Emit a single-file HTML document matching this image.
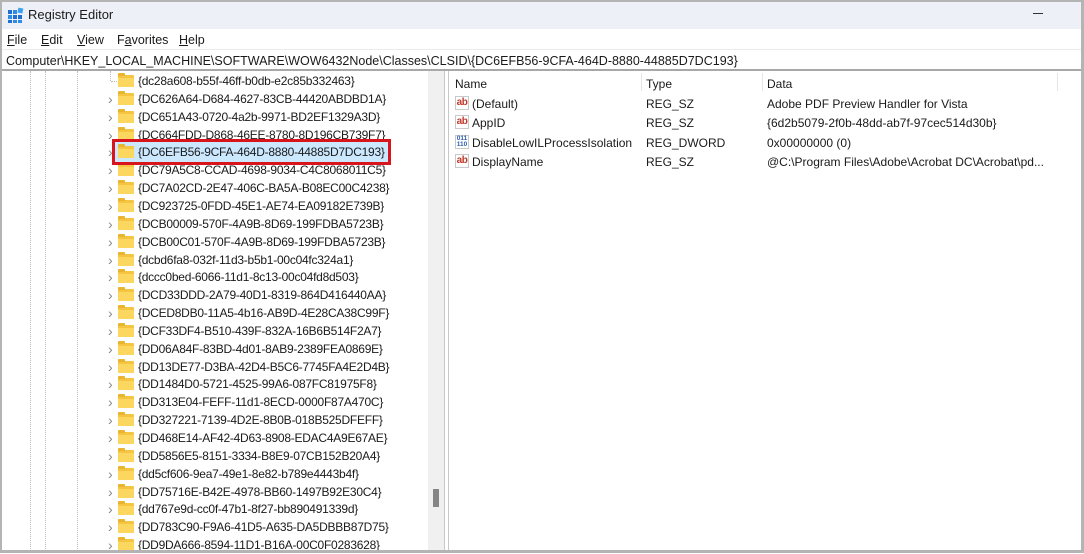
<!DOCTYPE html>
<html><head><meta charset="utf-8"><style>
*{margin:0;padding:0;box-sizing:border-box}
body{width:1084px;height:553px;overflow:hidden;background:#fff;font-family:"Liberation Sans",Arial,sans-serif;font-size:12.5px;color:#1a1a1a;position:relative}
.frame{position:absolute;left:0;top:0;width:1084px;height:553px;border:2px solid #b4b4b4;border-right-width:3px;border-bottom-width:3px;pointer-events:none;z-index:10}
.title{position:absolute;left:0;top:0;width:1084px;height:29px;background:#eef0f8}
.title span{position:absolute;left:28px;top:7px;font-size:13px}
.menu{position:absolute;left:0;top:29px;width:1084px;height:20px;background:#fff}
.menu span{position:absolute;top:4px;font-size:12.5px}
.addr{position:absolute;left:0;top:49px;width:1084px;height:22px;background:#fff;border-top:1px solid #ececec;border-bottom:2px solid #a8a8a8}
.addr span{position:absolute;left:6px;top:4px;font-size:12.5px;white-space:nowrap}
.dot{position:absolute;top:71px;height:482px;border-left:1px dotted #bdbdbd}
#tree{position:absolute;left:0;top:0;z-index:6}
.row{position:absolute;left:108px;height:17px;white-space:nowrap;font-size:12px;letter-spacing:-0.25px}
.chev{position:absolute;left:0;top:0;color:#888;font-size:14px}
.fold{position:absolute;left:10px;top:2px;width:16px;height:12px;background:#f5c542;border-radius:1px}
.fold:before{content:"";position:absolute;left:0;top:-2px;width:7px;height:3px;background:#e8b530;border-radius:1px 1px 0 0}
.fold:after{content:"";position:absolute;left:0;top:3px;width:16px;height:9px;background:#fbd75f}
.row .t{position:absolute;left:30px;top:1px}
.sb{position:absolute;left:428px;top:71px;width:16px;height:482px;background:#f0f0f0}
.thumb{position:absolute;left:433px;top:489px;width:6px;height:18px;background:#858585}
.split1{position:absolute;left:444px;top:71px;height:482px;border-left:1px solid #c8c8c8}
.split2{position:absolute;left:448px;top:71px;height:482px;border-left:1px solid #c8c8c8}
.rp{position:absolute;top:0;white-space:nowrap;font-size:12px}
.ab{position:absolute;left:455px;width:14px;height:14px;border:1px solid #c9c9c9;background:#fff;color:#c0392b;font-size:10px;font-weight:bold;line-height:11px;text-align:center;letter-spacing:-0.5px}
.bin{position:absolute;left:455px;width:14px;height:14px;border:1px solid #c9c9c9;background:#fff;color:#2a5db0;font-size:6.5px;font-weight:bold;line-height:6px;text-align:center}
</style></head><body>
<div class="title">
<svg style="position:absolute;left:8px;top:7px" width="16" height="16" viewBox="0 0 16 16"><rect x="0" y="3" width="4" height="4" fill="#1f6fd1"/><rect x="5" y="3" width="4" height="4" fill="#2f8be6"/><rect x="0" y="8" width="4" height="4" fill="#2f8be6"/><rect x="5" y="8" width="4" height="4" fill="#1f6fd1"/><rect x="0" y="13" width="4" height="3" fill="#1f6fd1"/><rect x="5" y="13" width="4" height="3" fill="#2f8be6"/><rect x="10" y="8" width="4" height="4" fill="#1f6fd1"/><rect x="10" y="13" width="4" height="3" fill="#2f8be6"/><rect x="10" y="1" width="5" height="5" fill="#3aa0f0" transform="rotate(12 12 3)"/></svg>
<span>Registry Editor</span>
<div style="position:absolute;left:1033px;top:13px;width:10px;height:1px;background:#333"></div>
</div>
<div class="menu">
<span style="left:7px"><u>F</u>ile</span>
<span style="left:41px"><u>E</u>dit</span>
<span style="left:77px"><u>V</u>iew</span>
<span style="left:117px">F<u>a</u>vorites</span>
<span style="left:179px"><u>H</u>elp</span>
</div>
<div class="addr"><span>Computer\HKEY_LOCAL_MACHINE\SOFTWARE\WOW6432Node\Classes\CLSID\{DC6EFB56-9CFA-464D-8880-44885D7DC193}</span></div>

<div class="dot" style="left:30px"></div>
<div class="dot" style="left:45px"></div>
<div class="dot" style="left:77px"></div>
<div class="dot" style="left:110px;top:71px;height:10px"></div>
<div style="position:absolute;left:111px;top:81px;width:6px;border-top:1px dotted #bdbdbd"></div>

<div style="position:absolute;left:114px;top:141px;width:275px;height:21px;background:#cce8ff"></div>
<div id="tree"></div>
<div style="position:absolute;left:112px;top:139px;width:279px;height:26px;border:3px solid #d8141c;z-index:7"></div>

<div class="sb"></div><div class="thumb"></div>
<div class="split1"></div><div class="split2"></div>

<div class="rp" style="left:455px;top:77px">Name</div>
<div class="rp" style="left:646px;top:77px">Type</div>
<div class="rp" style="left:767px;top:77px">Data</div>
<div style="position:absolute;left:641px;top:73px;height:18px;border-left:1px solid #e5e5e5"></div>
<div style="position:absolute;left:762px;top:73px;height:18px;border-left:1px solid #e5e5e5"></div>
<div style="position:absolute;left:1057px;top:73px;height:18px;border-left:1px solid #e5e5e5"></div>

<div class="ab" style="top:96px">ab</div>
<div class="rp" style="left:472px;top:97px">(Default)</div>
<div class="rp" style="left:646px;top:97px">REG_SZ</div>
<div class="rp" style="left:767px;top:97px">Adobe PDF Preview Handler for Vista</div>

<div class="ab" style="top:115px">ab</div>
<div class="rp" style="left:472px;top:116px">AppID</div>
<div class="rp" style="left:646px;top:116px">REG_SZ</div>
<div class="rp" style="left:767px;top:116px">{6d2b5079-2f0b-48dd-ab7f-97cec514d30b}</div>

<div class="bin" style="top:135px">011<br>110</div>
<div class="rp" style="left:472px;top:136px">DisableLowILProcessIsolation</div>
<div class="rp" style="left:646px;top:136px">REG_DWORD</div>
<div class="rp" style="left:767px;top:136px">0x00000000 (0)</div>

<div class="ab" style="top:154px">ab</div>
<div class="rp" style="left:472px;top:155px">DisplayName</div>
<div class="rp" style="left:646px;top:155px">REG_SZ</div>
<div class="rp" style="left:767px;top:155px">@C:\Program Files\Adobe\Acrobat DC\Acrobat\pd...</div>

<div class="frame"></div>
<script>
var k=["{dc28a608-b55f-46ff-b0db-e2c85b332463}","{DC626A64-D684-4627-83CB-44420ABDBD1A}","{DC651A43-0720-4a2b-9971-BD2EF1329A3D}","{DC664FDD-D868-46EE-8780-8D196CB739F7}","{DC6EFB56-9CFA-464D-8880-44885D7DC193}","{DC79A5C8-CCAD-4698-9034-C4C8068011C5}","{DC7A02CD-2E47-406C-BA5A-B08EC00C4238}","{DC923725-0FDD-45E1-AE74-EA09182E739B}","{DCB00009-570F-4A9B-8D69-199FDBA5723B}","{DCB00C01-570F-4A9B-8D69-199FDBA5723B}","{dcbd6fa8-032f-11d3-b5b1-00c04fc324a1}","{dccc0bed-6066-11d1-8c13-00c04fd8d503}","{DCD33DDD-2A79-40D1-8319-864D416440AA}","{DCED8DB0-11A5-4b16-AB9D-4E28CA38C99F}","{DCF33DF4-B510-439F-832A-16B6B514F2A7}","{DD06A84F-83BD-4d01-8AB9-2389FEA0869E}","{DD13DE77-D3BA-42D4-B5C6-7745FA4E2D4B}","{DD1484D0-5721-4525-99A6-087FC81975F8}","{DD313E04-FEFF-11d1-8ECD-0000F87A470C}","{DD327221-7139-4D2E-8B0B-018B525DFEFF}","{DD468E14-AF42-4D63-8908-EDAC4A9E67AE}","{DD5856E5-8151-3334-B8E9-07CB152B20A4}","{dd5cf606-9ea7-49e1-8e82-b789e4443b4f}","{DD75716E-B42E-4978-BB60-1497B92E30C4}","{dd767e9d-cc0f-47b1-8f27-bb890491339d}","{DD783C90-F9A6-41D5-A635-DA5DBBB87D75}","{DD9DA666-8594-11D1-B16A-00C0F0283628}"];
var h="";for(var i=0;i<k.length;i++){var y=73+i*17.85;h+='<div class="row" style="top:'+y+'px">'+(i?'<span class="chev">&#8250;</span>':'')+'<span class="fold"></span><span class="t">'+k[i]+'</span></div>';}
document.getElementById("tree").innerHTML=h;
</script>
</body></html>
